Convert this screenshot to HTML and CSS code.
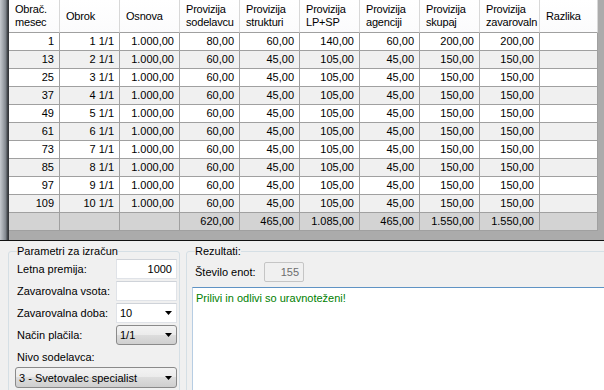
FILE: index.html
```html
<!DOCTYPE html>
<html lang="sl">
<head>
<meta charset="utf-8">
<title>Provizije</title>
<link rel="stylesheet" href="styles.css">
</head>
<body>
<div class="top">
  <div class="strip"></div>
  <div class="grid">
    <div class="row head">
      <div>Obrač. mesec</div><div>Obrok</div><div>Osnova</div><div>Provizija sodelavcu</div><div>Provizija strukturi</div><div>Provizija LP+SP</div><div>Provizija agenciji</div><div>Provizija skupaj</div><div>Provizija zavarovaln</div><div>Razlika</div>
    </div>
    <div class="row"><div>1</div><div>1 1/1</div><div>1.000,00</div><div>80,00</div><div>60,00</div><div>140,00</div><div>60,00</div><div>200,00</div><div>200,00</div><div></div></div>
    <div class="row alt"><div>13</div><div>2 1/1</div><div>1.000,00</div><div>60,00</div><div>45,00</div><div>105,00</div><div>45,00</div><div>150,00</div><div>150,00</div><div></div></div>
    <div class="row"><div>25</div><div>3 1/1</div><div>1.000,00</div><div>60,00</div><div>45,00</div><div>105,00</div><div>45,00</div><div>150,00</div><div>150,00</div><div></div></div>
    <div class="row alt"><div>37</div><div>4 1/1</div><div>1.000,00</div><div>60,00</div><div>45,00</div><div>105,00</div><div>45,00</div><div>150,00</div><div>150,00</div><div></div></div>
    <div class="row"><div>49</div><div>5 1/1</div><div>1.000,00</div><div>60,00</div><div>45,00</div><div>105,00</div><div>45,00</div><div>150,00</div><div>150,00</div><div></div></div>
    <div class="row alt"><div>61</div><div>6 1/1</div><div>1.000,00</div><div>60,00</div><div>45,00</div><div>105,00</div><div>45,00</div><div>150,00</div><div>150,00</div><div></div></div>
    <div class="row"><div>73</div><div>7 1/1</div><div>1.000,00</div><div>60,00</div><div>45,00</div><div>105,00</div><div>45,00</div><div>150,00</div><div>150,00</div><div></div></div>
    <div class="row alt"><div>85</div><div>8 1/1</div><div>1.000,00</div><div>60,00</div><div>45,00</div><div>105,00</div><div>45,00</div><div>150,00</div><div>150,00</div><div></div></div>
    <div class="row"><div>97</div><div>9 1/1</div><div>1.000,00</div><div>60,00</div><div>45,00</div><div>105,00</div><div>45,00</div><div>150,00</div><div>150,00</div><div></div></div>
    <div class="row alt"><div>109</div><div>10 1/1</div><div>1.000,00</div><div>60,00</div><div>45,00</div><div>105,00</div><div>45,00</div><div>150,00</div><div>150,00</div><div></div></div>
    <div class="row total"><div></div><div></div><div></div><div>620,00</div><div>465,00</div><div>1.085,00</div><div>465,00</div><div>1.550,00</div><div>1.550,00</div><div></div></div>
  </div>
</div>
<div class="panel">
  <fieldset class="group params">
    <legend>Parametri za izračun</legend>
    <div class="field first"><span>Letna premija:</span><div class="box num">1000</div></div>
    <div class="field"><span>Zavarovalna vsota:</span><div class="box num"></div></div>
    <div class="field"><span>Zavarovalna doba:</span><div class="box combo"><span>10</span><svg width="7" height="4" viewBox="0 0 7 4"><path d="M0 0h7L3.5 4z"/></svg></div></div>
    <div class="field"><span>Način plačila:</span><div class="box btn"><span>1/1</span><svg width="7" height="4" viewBox="0 0 7 4"><path d="M0 0h7L3.5 4z"/></svg></div></div>
    <div class="caption">Nivo sodelavca:</div>
    <div class="box btn wide"><span>3 - Svetovalec specialist</span><svg width="7" height="4" viewBox="0 0 7 4"><path d="M0 0h7L3.5 4z"/></svg></div>
  </fieldset>
  <fieldset class="group results">
    <legend>Rezultati:</legend>
    <div class="units"><span class="ulbl">Število enot:</span><div class="box disabled">155</div></div>
    <div class="memo">Prilivi in odlivi so uravnoteženi!</div>
  </fieldset>
</div>
</body>
</html>
```
FILE: styles.css
```css
html, body {
  margin: 0;
  padding: 0;
}
body {
  width: 604px;
  height: 390px;
  overflow: hidden;
  background: #f0f0f0;
  font: 11px "Liberation Sans", Arial, sans-serif;
  color: #000;
}
.top {
  display: flex;
  height: 240px;
  background: #ababab;
  border-bottom: 1px solid #111;
}
.strip {
  width: 9px;
  flex: none;
  background: linear-gradient(to right, #c6cacf 0, #a3a8ae 3px, #7d838a 6px, #4b4f54 7px, #2e3033 9px);
}
.grid {
  width: 589px;
  flex: none;
}
.row {
  display: grid;
  grid-template-columns: 51px repeat(8, 60px) 58px;
  height: 18px;
  background: #fff;
}
.row > div {
  box-sizing: border-box;
  border-right: 1px solid #a0a0a0;
  border-bottom: 1px solid #a0a0a0;
  text-align: right;
  padding-right: 5px;
  line-height: 17px;
  white-space: nowrap;
  overflow: hidden;
}
.row.alt {
  background: #f0f0f0;
}
.row.total {
  background: #d3d3d3;
}
.row.head {
  height: 33px;
  background: linear-gradient(#ffffff, #fbfbfc);
}
.row.head > div {
  display: flex;
  align-items: center;
  text-align: left;
  padding: 0 0 0 6px;
  line-height: 13px;
  white-space: normal;
  border-right-color: #d8d8d8;
  border-bottom-color: #a0a0a0;
  letter-spacing: -0.2px;
}
.panel {
  display: flex;
  gap: 6px;
  height: 149px;
  padding: 4px 0 0 8px;
  box-sizing: border-box;
  overflow: hidden;
}
.group {
  margin: 0;
  border: 1px solid #d5dfe5;
  border-radius: 3px;
  padding: 0 2px 0 8px;
  min-width: 0;
  box-sizing: border-box;
  height: 160px;
  flex: none;
}
.group legend {
  padding: 0;
  line-height: 13px;
}
.params {
  width: 172px;
}
.results {
  width: 430px;
}
.field {
  display: flex;
  align-items: center;
  justify-content: space-between;
  height: 20px;
  margin-top: 2px;
}
.field.first {
  margin-top: 1px;
}
.box {
  box-sizing: border-box;
  width: 61px;
  height: 20px;
  line-height: 18px;
  background: #fff;
  border: 1px solid #e0e3e8;
  border-top-color: #cfd3d9;
}
.box.num {
  text-align: right;
  padding-right: 4px;
}
.combo, .btn {
  display: flex;
  align-items: center;
  justify-content: space-between;
  padding: 0 4px 0 3px;
}
.btn {
  border: 1px solid #8a8a8a;
  border-radius: 3px;
  background: linear-gradient(#f3f3f3 0, #ebebeb 50%, #dddddd 50%, #cfcfcf 100%);
}
.caption {
  margin-top: 6px;
  line-height: 13px;
}
.btn.wide {
  width: 162px;
  height: 21px;
  margin: 3px 0 0 -2px;
}
.ulbl {
  width: 69px;
}
.units {
  display: flex;
  align-items: center;
  height: 20px;
  margin-top: 4px;
}
.box.disabled {
  width: 40px;
  background: #f0f0f0;
  border: 1px solid #c5c5c5;
  border-radius: 2px;
  color: #6d6d6d;
  text-align: right;
  padding-right: 4px;
}
.memo {
  margin: 5px 0 0 -3px;
  height: 120px;
  background: #fff;
  border-top: 1px solid #5f93c4;
  border-left: 1px solid #b7cde3;
  padding: 4px 3px;
  color: #008000;
  line-height: 13px;
}
```
